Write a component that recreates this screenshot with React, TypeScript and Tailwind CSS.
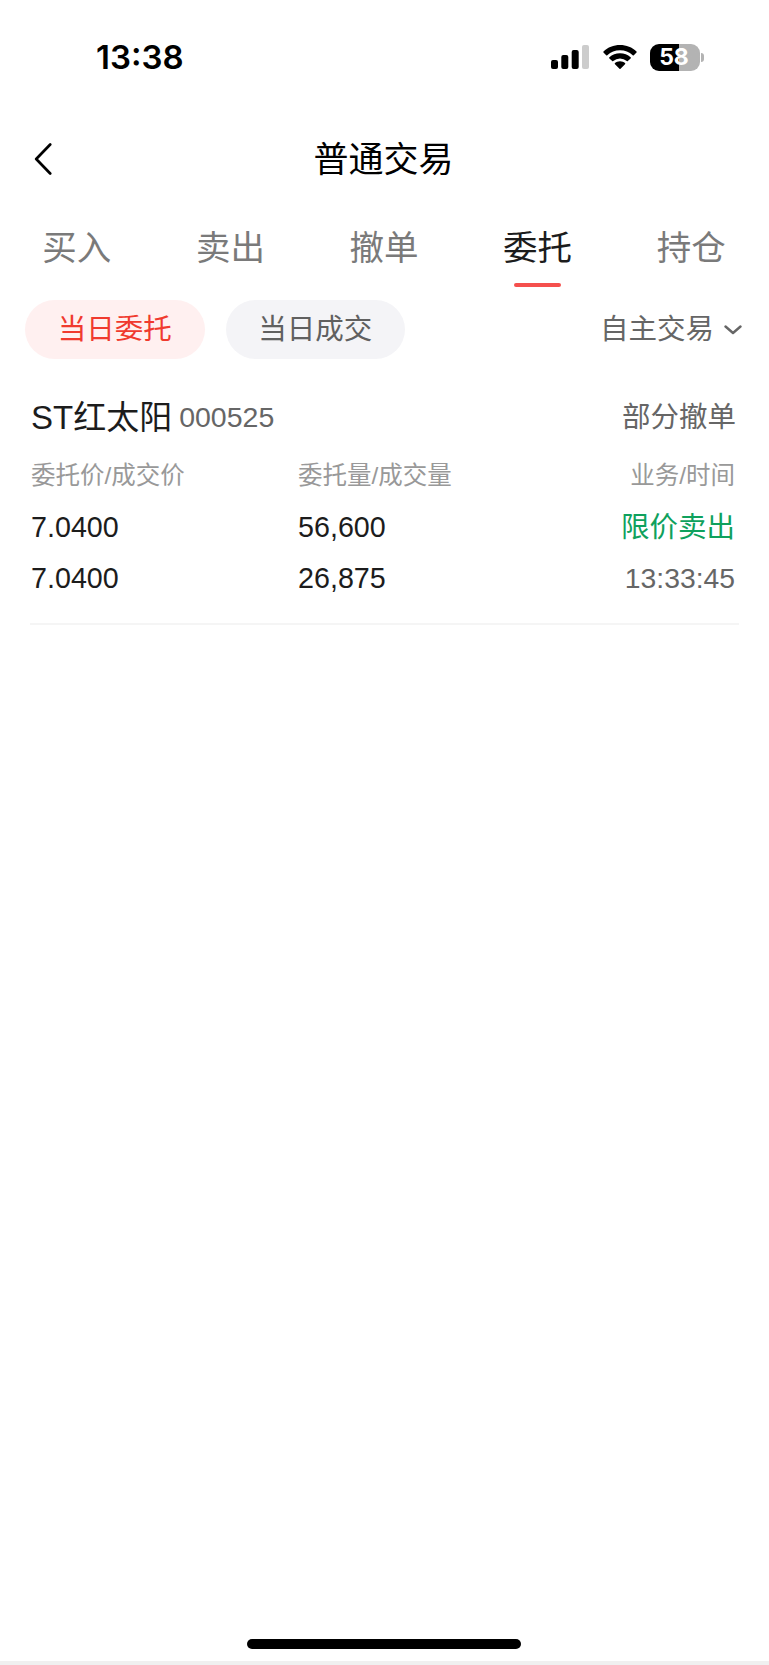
import React, { useState } from 'react'

interface Order {
  name: string
  code: string
  status: string
  price: string
  dealPrice: string
  amount: string
  dealAmount: string
  business: string
  time: string
}

const tabs = ['买入', '卖出', '撤单', '委托', '持仓']
const filters = ['当日委托', '当日成交']

const orders: Order[] = [
  {
    name: 'ST红太阳',
    code: '000525',
    status: '部分撤单',
    price: '7.0400',
    dealPrice: '7.0400',
    amount: '56,600',
    dealAmount: '26,875',
    business: '限价卖出',
    time: '13:33:45'
  }
]

const StatusBar: React.FC = () => (
  <div className="flex h-[114px] items-center justify-between pl-[96px] pr-[65px] text-black">
    <span className="pt-px font-['Inter',sans-serif] text-[33px] font-semibold leading-none">13:38</span>
    <div className="flex items-center">
      {/* Signal */}
      <svg width="39" height="26" viewBox="0 0 39 26">
        <rect x="0" y="16" width="7" height="9" rx="2" />
        <rect x="10.3" y="11" width="7" height="14" rx="2" />
        <rect x="20.7" y="6" width="7" height="19" rx="2" />
        <rect x="31" y="1" width="7" height="24" rx="2" fill="#cccccc" />
      </svg>
      {/* Wifi */}
      <svg className="ml-[13px]" width="34" height="26" viewBox="0 0 34 26">
        <path d="M17 1C10.6 1 4.8 3.4.5 7.4a.7.7 0 0 0 0 1l2.7 2.8a.8.8 0 0 0 1.1 0A18.5 18.5 0 0 1 17 6.2a18.5 18.5 0 0 1 12.7 5 .8.8 0 0 0 1.1 0l2.700-2.800a.7.7 0 0 0 0-1C29.2 3.4 23.4 1 17 1z" />
        <path d="M17 9.300c-4.100 0-7.800 1.500-10.600 4a.7.7 0 0 0 0 1.100l2.800 2.700c.3.3.7.3 1 0a10.300 10.300 0 0 1 13.600 0c.3.3.7.3 1 0l2.800-2.700a.7.7 0 0 0 0-1.100c-2.800-2.500-6.500-4-10.600-4z" />
        <path d="M17 17.300c-2 0-3.700.7-5 1.800a.7.7 0 0 0 0 1.100l4.500 4.500c.3.3.7.3 1 0l4.500-4.500a.7.7 0 0 0 0-1.100c-1.300-1.100-3-1.800-5-1.800z" />
      </svg>
      {/* Battery */}
      <div className="ml-[13px] flex h-[27px] w-[50px] items-center justify-center rounded-[9px] bg-linear-to-r from-black from-58% to-[#b3b3b3] to-58%">
        <span className="pr-[2px] pt-px font-['Inter',sans-serif] text-[23px] font-bold leading-none text-white">58</span>
      </div>
      <div className="ml-[1px] h-[9px] w-[3px] rounded-r-full bg-[#b3b3b3]" />
    </div>
  </div>
)

const OrderItem: React.FC<{ order: Order }> = ({ order }) => (
  <div className="mx-[30px] border-b-2 border-[#f5f5f5] pt-[30px] pb-[19px]">
    <div className="flex h-[56px] items-center justify-between pl-px">
      <div className="flex items-center">
        <span className="text-[33px] leading-none">{order.name}</span>
        <span className="ml-[7px] text-[28.5px] leading-none text-[#666666]">{order.code}</span>
      </div>
      <span className="mr-[3px] text-[28.5px] leading-none text-[#666666]">{order.status}</span>
    </div>
    <div className="grid grid-cols-[267px_1fr_auto] pl-px pr-[4px] text-[28.7px]">
      <span className="h-[57px] text-[24.5px] leading-[61px] text-[#999999]">委托价/成交价</span>
      <span className="h-[57px] text-[24.5px] leading-[61px] text-[#999999]">委托量/成交量</span>
      <span className="h-[57px] text-right text-[24.5px] leading-[61px] text-[#999999]">业务/时间</span>
      <span className="leading-[51px]">{order.price}</span>
      <span className="leading-[51px]">{order.amount}</span>
      <span className="text-right text-[28.5px] leading-[51px] text-[#0fa15d]">{order.business}</span>
      <span className="leading-[51px]">{order.dealPrice}</span>
      <span className="leading-[51px]">{order.dealAmount}</span>
      <span className="text-right text-[28.3px] leading-[51px] text-[#666666]">{order.time}</span>
    </div>
  </div>
)

const App: React.FC = () => {
  const [activeTab, setActiveTab] = useState('委托')
  const [activeFilter, setActiveFilter] = useState('当日委托')

  return (
    <div className="flex h-[1665px] w-[769px] flex-col overflow-hidden bg-white font-['Liberation_Sans','Noto_Sans_CJK_SC',sans-serif] text-[#1c1c1c]">
      <StatusBar />

      {/* Header */}
      <header className="grid h-[90px] grid-cols-[99px_1fr_101px] items-center text-black">
        <button className="pl-[34px]">
          <svg width="18" height="32" viewBox="0 0 18 32" fill="none" stroke="currentColor" strokeWidth="2.7" strokeLinecap="round" strokeLinejoin="round">
            <path d="M16.200 1.500 2.200 16l14 14.500" />
          </svg>
        </button>
        <h1 className="text-center text-[35px] leading-none">普通交易</h1>
      </header>

      {/* Tabs */}
      <nav className="grid h-[84px] grid-cols-5 pr-px">
        {tabs.map((tab) => (
          <button
            key={tab}
            onClick={() => setActiveTab(tab)}
            className={`flex flex-col items-center pt-[10px] text-[34.5px] leading-[69px] ${
              activeTab === tab ? 'text-[#1c1c1c]' : 'text-[#7a7a7a]'
            }`}
          >
            <span>{tab}</span>
            {activeTab === tab && <span className="h-[4px] w-[47px] shrink-0 rounded-full bg-[#f5504d]" />}
          </button>
        ))}
      </nav>

      {/* Filters */}
      <div className="mt-[12px] flex h-[59px] items-center pl-[25px] pr-[27px]">
        {filters.map((filter) => (
          <button
            key={filter}
            onClick={() => setActiveFilter(filter)}
            className={`mr-[21px] h-[59px] w-[179.5px] rounded-full text-[28.5px] leading-none ${
              activeFilter === filter ? 'bg-[#fff0f0] text-[#f03a2e]' : 'bg-[#f4f4f7] text-[#606060]'
            }`}
          >
            {filter}
          </button>
        ))}
        <button className="ml-auto flex items-center text-[28.5px] leading-none text-[#666666]">
          自主交易
          <svg className="ml-[10px]" width="18" height="10" viewBox="0 0 18 10" fill="none" stroke="currentColor" strokeWidth="2.4" strokeLinecap="round" strokeLinejoin="round">
            <path d="M1.500 1.500 9 8l7.500-6.500" />
          </svg>
        </button>
      </div>

      {/* Orders */}
      <main className="flex-1">
        {orders.map((order) => (
          <OrderItem key={order.code} order={order} />
        ))}
      </main>

      {/* Home indicator */}
      <div className="ml-[247px] mb-[12px] h-[10px] w-[274px] shrink-0 rounded-full bg-black" />
      <div className="h-[4px] shrink-0 bg-[#f0f0f0]" />
    </div>
  )
}

export default App
